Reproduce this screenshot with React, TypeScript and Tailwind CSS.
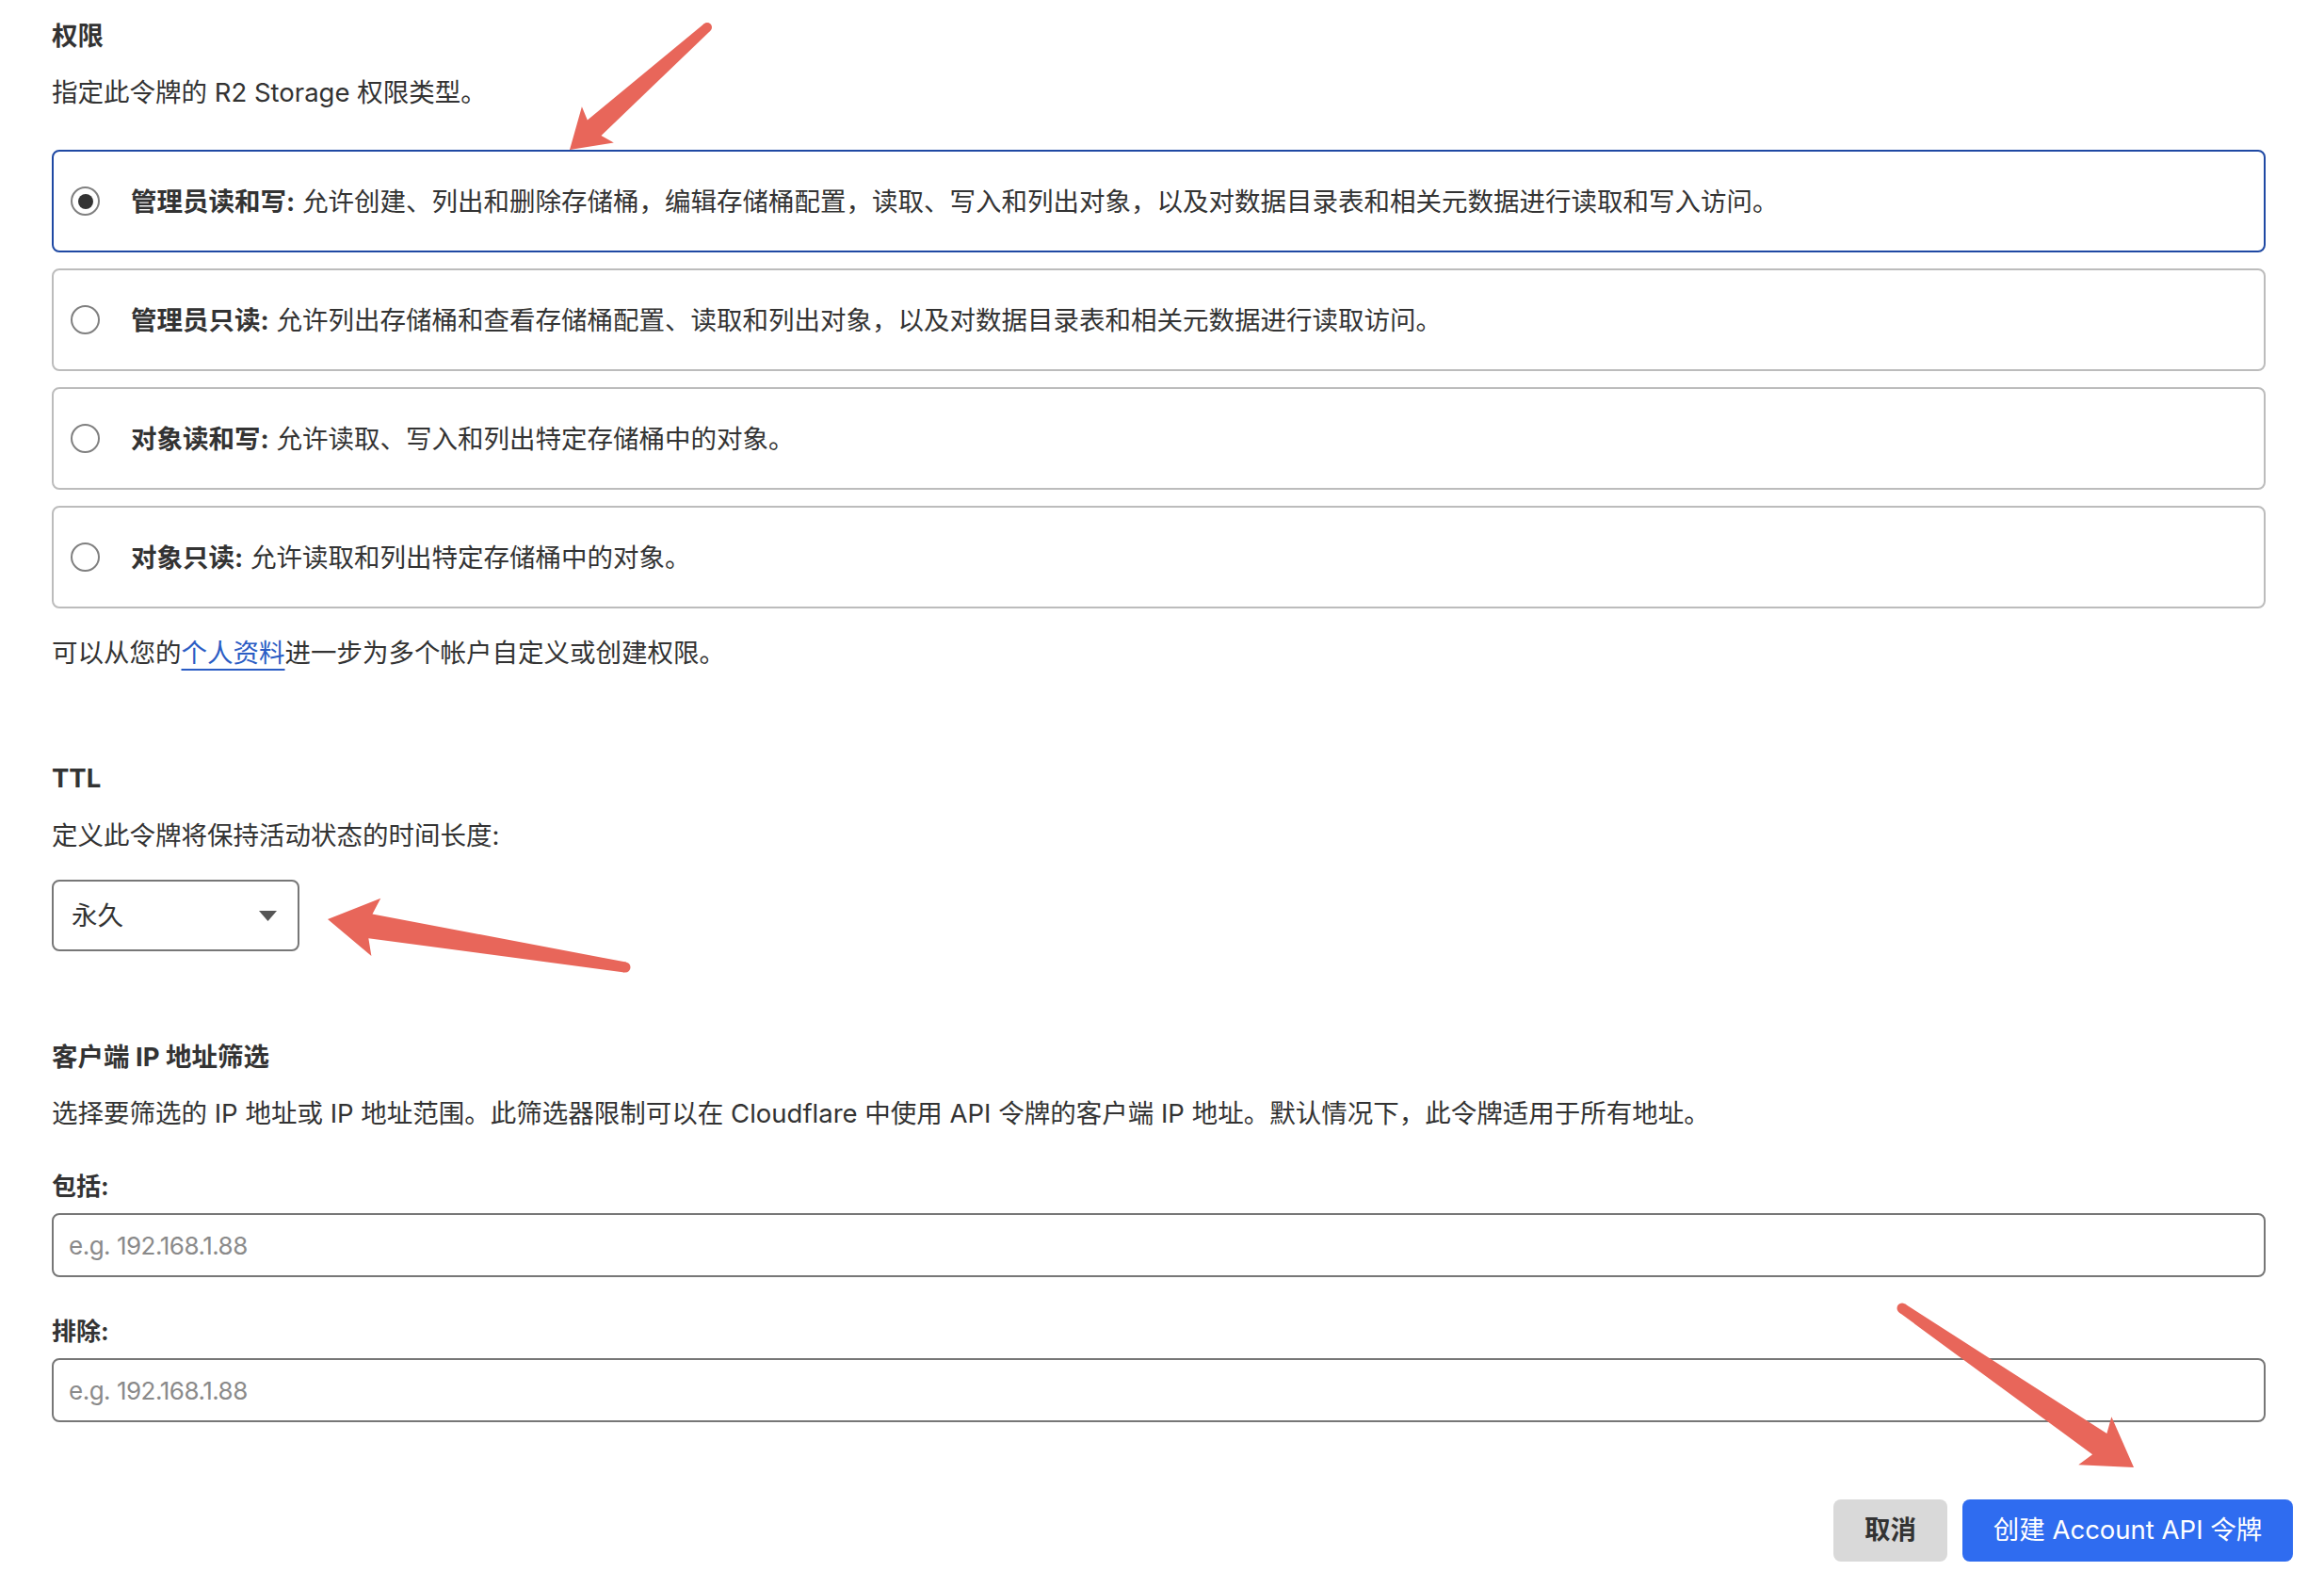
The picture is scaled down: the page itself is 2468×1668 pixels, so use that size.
import React, { useState } from 'react';

type Pt = [number, number];

interface ArrowSpec {
  tail: Pt;
  tip: Pt;
  tw: number; // half width at tail
  nw: number; // half width at neck
  nd: number; // neck distance from tip
  bw: number; // half width of barbs
  bd: number; // barb distance from tip
}

const arrows: ArrowSpec[] = [
  { tail: [751, 29], tip: [605, 159], tw: 5, nw: 11, nd: 35, bw: 25.5, bd: 40 },
  { tail: [664, 1027], tip: [348, 976], tw: 5.5, nw: 13, nd: 46, bw: 31, bd: 52 },
  { tail: [2020, 1389], tip: [2266, 1558], tw: 5.5, nw: 13.5, nd: 44, bw: 31, bd: 50 },
];

const arrowPath = (a: ArrowSpec) => {
  const dx = a.tip[0] - a.tail[0];
  const dy = a.tip[1] - a.tail[1];
  const len = Math.hypot(dx, dy);
  const ux = dx / len;
  const uy = dy / len;
  const nx = -uy;
  const ny = ux;
  const p = (base: Pt, along: number, side: number) =>
    `${base[0] + ux * along + nx * side},${base[1] + uy * along + ny * side}`;
  return [
    `M${p(a.tail, 0, a.tw)}`,
    `L${p(a.tip, -a.nd, a.nw)}`,
    `L${p(a.tip, -a.bd, a.bw)}`,
    `L${a.tip[0]},${a.tip[1]}`,
    `L${p(a.tip, -a.bd, -a.bw)}`,
    `L${p(a.tip, -a.nd, -a.nw)}`,
    `L${p(a.tail, 0, -a.tw)}`,
    'Z',
  ].join(' ');
};

const permissions = [
  {
    id: 'admin-rw',
    title: '管理员读和写:',
    desc: '允许创建、列出和删除存储桶，编辑存储桶配置，读取、写入和列出对象，以及对数据目录表和相关元数据进行读取和写入访问。',
  },
  {
    id: 'admin-ro',
    title: '管理员只读:',
    desc: '允许列出存储桶和查看存储桶配置、读取和列出对象，以及对数据目录表和相关元数据进行读取访问。',
  },
  { id: 'obj-rw', title: '对象读和写:', desc: '允许读取、写入和列出特定存储桶中的对象。' },
  { id: 'obj-ro', title: '对象只读:', desc: '允许读取和列出特定存储桶中的对象。' },
];

export default function App() {
  const [selected, setSelected] = useState('admin-rw');

  return (
    <div className="relative min-h-[1668px] w-[2468px] overflow-hidden bg-white font-[Inter,'Noto_Sans_CJK_SC',sans-serif] text-[#333]">
      <div className="pl-[55px] pr-[62px] pt-[18px]">
        {/* 权限 */}
        <h2 className="text-[27.5px] leading-[40px] font-bold">权限</h2>
        <p className="mt-[20px] text-[27.5px] leading-[40px]">指定此令牌的 R2 Storage 权限类型。</p>

        <div className="mt-[41px] flex flex-col gap-[17px]">
          {permissions.map((perm) => {
            const isOn = selected === perm.id;
            return (
              <label
                key={perm.id}
                onClick={() => setSelected(perm.id)}
                className={`flex h-[109px] cursor-pointer items-center rounded-[8px] border-2 pl-[18px] ${
                  isOn ? 'border-[#1f49a3]' : 'border-[#bcbcbc]'
                }`}
              >
                <span className="flex h-[31px] w-[31px] shrink-0 items-center justify-center rounded-full border-2 border-[#808080]">
                  {isOn && <span className="h-[16px] w-[16px] rounded-full bg-[#333]" />}
                </span>
                <span className="ml-[33px] text-[27.5px] leading-[40px]">
                  <strong className="font-bold">{perm.title}</strong> {perm.desc}
                </span>
              </label>
            );
          })}
        </div>

        <p className="mt-[27px] text-[27.5px] leading-[40px]">
          可以从您的
          <a href="#" className="text-[#2a5cc4] underline underline-offset-[7px] decoration-[2px]">
            个人资料
          </a>
          进一步为多个帐户自定义或创建权限。
        </p>

        {/* TTL */}
        <h2 className="mt-[93px] text-[27.5px] leading-[40px] font-bold">TTL</h2>
        <p className="mt-[21px] text-[27.5px] leading-[40px]">定义此令牌将保持活动状态的时间长度:</p>
        <div className="mt-[27px] flex h-[76px] w-[263px] items-center justify-between rounded-[8px] border-2 border-[#777] pl-[19px] pr-[22px]">
          <span className="text-[27.5px] leading-[40px]">永久</span>
          <svg width="19" height="11" viewBox="0 0 19 11">
            <path d="M0 0 H19 L9.5 11 Z" fill="#555" />
          </svg>
        </div>

        {/* 客户端 IP 地址筛选 */}
        <h2 className="mt-[92px] text-[27.5px] leading-[40px] font-bold">客户端 IP 地址筛选</h2>
        <p className="mt-[20px] text-[27.5px] leading-[40px]">
          选择要筛选的 IP 地址或 IP 地址范围。此筛选器限制可以在 Cloudflare 中使用 API 令牌的客户端 IP 地址。默认情况下，此令牌适用于所有地址。
        </p>

        <label className="mt-[38px] block text-[26px] leading-[40px] font-bold">包括:</label>
        <input
          placeholder="e.g. 192.168.1.88"
          className="mt-[8px] block h-[68px] w-full rounded-[8px] border-2 border-[#777] px-[16px] text-[26px] tracking-[-0.5px] outline-none placeholder:text-[#8a8a8a]"
        />

        <label className="mt-[38px] block text-[26px] leading-[40px] font-bold">排除:</label>
        <input
          placeholder="e.g. 192.168.1.88"
          className="mt-[8px] block h-[68px] w-full rounded-[8px] border-2 border-[#777] px-[16px] text-[26px] tracking-[-0.5px] outline-none placeholder:text-[#8a8a8a]"
        />
      </div>

      <div className="mt-[82px] flex justify-end gap-[16px] pr-[33px]">
        <button className="h-[66px] w-[121px] rounded-[8px] bg-[#d9d9d9] text-[27.5px] font-semibold text-[#333]">
          取消
        </button>
        <button className="h-[66px] w-[351px] rounded-[8px] bg-[#2f6cf0] text-[27.5px] font-normal text-white">
          创建 Account API 令牌
        </button>
      </div>

      {/* annotation arrows */}
      <svg className="pointer-events-none absolute left-0 top-0" width="2468" height="1668" viewBox="0 0 2468 1668">
        {arrows.map((a, i) => (
          <g key={i} fill="#e8665a">
            <path d={arrowPath(a)} />
            <circle cx={a.tail[0]} cy={a.tail[1]} r={a.tw} />
          </g>
        ))}
      </svg>
    </div>
  );
}
